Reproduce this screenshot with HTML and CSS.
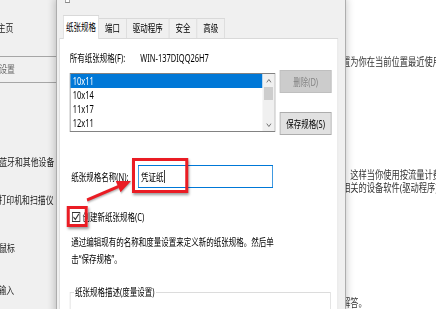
FILE: index.html
```html
<!DOCTYPE html>
<html lang="zh-CN">
<head>
  <meta charset="UTF-8">
  <title>打印服务器属性 - 纸张规格</title>
  <link rel="stylesheet" href="styles.css">
</head>
<body>
  <div id="screen">
    <div id="nav">
      <div class="nav-item" id="home">主页</div>
      <div id="search">设置</div>
      <div class="nav-item" id="bt">蓝牙和其他设备</div>
      <div class="nav-item" id="printer">打印机和扫描仪</div>
      <div class="nav-item" id="mouse">鼠标</div>
      <div class="nav-item" id="typing">输入</div>
    </div>

    <div id="page">
      <p class="line" id="l1">置为你在当前位置最近使用的打印机</p>
      <p class="line" id="l2">，这样当你使用按流量计费的连接时</p>
      <p class="line" id="l3">相关的设备软件(驱动程序)</p>
      <p class="line" id="l4">解答。</p>
    </div>

    <div id="dialog">
      <div id="titleIcon"></div>
      <div id="tabs">
        <div class="tab active">纸张规格</div>
        <div class="tab">端口</div>
        <div class="tab">驱动程序</div>
        <div class="tab">安全</div>
        <div class="tab">高级</div>
      </div>

      <div id="panel">
        <div class="row"><span class="lbl">所有纸张规格(F):</span><span>WIN-137DIQQ26H7</span></div>

        <div id="listRow">
          <div id="list">
            <ul id="items">
              <li class="sel">10x11</li>
              <li>10x14</li>
              <li>11x17</li>
              <li>12x11</li>
            </ul>
            <div id="scroll">
              <div class="arr"><svg width="7" height="4" viewBox="0 0 7 4"><polyline points="0.5,3.5 3.5,0.5 6.5,3.5" fill="none" stroke="#606060" stroke-width="1"/></svg></div>
              <div class="thumb"></div>
              <div class="track"></div>
              <div class="arr"><svg width="7" height="4" viewBox="0 0 7 4"><polyline points="0.5,0.5 3.5,3.5 6.5,0.5" fill="none" stroke="#606060" stroke-width="1"/></svg></div>
            </div>
          </div>
          <div id="btns">
            <button class="but" disabled>删除(D)</button>
            <button class="but">保存规格(S)</button>
          </div>
        </div>

        <div id="nameRow">
          <label>纸张规格名称(N):</label>
          <div id="nameInput">凭证纸<span class="caret"></span></div>
        </div>

        <div id="checkRow">
          <span class="check"><svg width="9" height="8" viewBox="0 0 9 8"><polyline points="1,4 3.5,6.5 8,1" fill="none" stroke="#333" stroke-width="1.2"/></svg></span>
          创建新纸张规格(C)
        </div>

        <p id="hint">通过编辑现有的名称和度量设置来定义新的纸张规格。然后单<br>击“保存规格”。</p>

        <fieldset>
          <legend>纸张规格描述(度量设置)</legend>
        </fieldset>
      </div>
    </div>

    <!-- red marks drawn over the shot -->
    <div class="mark" id="mark1"></div>
    <div class="mark" id="mark2"></div>
    <svg id="arrow" width="582" height="309" viewBox="0 0 582 309">
      <line x1="116" y1="200" x2="158" y2="186.5" stroke="#ea1c24" stroke-width="3"/>
      <polygon points="174.7,181 154.3,181 160.7,192.2" fill="#ea1c24"/>
    </svg>
  </div>
</body>
</html>
```

FILE: styles.css
```css
* {
  margin: 0;
  padding: 0;
  box-sizing: border-box;
}
html, body {
  width: 436px;
  height: 309px;
  overflow: hidden;
  background: #fff;
}
body {
  font-family: "Noto Sans", "Noto Sans CJK SC", sans-serif;
  font-size: 10px;
  color: #000;
}

/* the shot is squeezed to 3/4 width, so lay it out wide and scale back */
#screen {
  position: relative;
  display: flex;
  width: 582px;
  height: 309px;
  transform: scaleX(0.75);
  transform-origin: 0 0;
  overflow: hidden;
}

/* settings window behind */
#nav {
  width: 75px;
  flex: none;
  background: #f0f0f0;
  font-size: 10.5px;
  line-height: 14px;
  color: #1a1a1a;
}
.nav-item {
  white-space: nowrap;
  margin-left: -1px;
}
#home {
  margin-top: 21px;
  margin-left: -3px;
}
#search {
  margin-top: 21px;
  margin-left: -12px;
  width: 100px;
  height: 27px;
  border: 1px solid #a6a6a6;
  padding: 5px 0 0 10px;
  color: #666;
}
#bt { margin-top: 72px; }
#printer { margin-top: 24px; margin-left: -2px; }
#mouse { margin-top: 34px; }
#typing { margin-top: 28px; margin-left: -2px; }

#page {
  flex: 1;
  padding-left: 381px;
  font-size: 11px;
  line-height: 14px;
  color: #333;
  white-space: nowrap;
}
#l1 { margin-top: 55px; }
#l2 { margin-top: 99px; }
#l3 { margin-top: -1px; }
#l4 { margin-top: 101px; }

/* dialog */
#dialog {
  position: absolute;
  left: 75px;
  top: 0;
  width: 386px;
  height: 330px;
  background: #f0f0f0;
  border-left: 1px solid #9a9a9a;
  border-right: 1px solid #9a9a9a;
  padding: 0 9px 0 3px;
  box-shadow: 0 0 9px 2px rgba(0, 0, 0, 0.22);
}
#titleIcon {
  width: 6px;
  height: 3px;
  margin-left: 8px;
  background: #fff;
  border: 1px solid #8a8a8a;
  border-top: none;
}

#tabs {
  display: flex;
  align-items: flex-end;
  margin-top: 12px;
  padding-left: 5px;
}
.tab {
  height: 20px;
  padding: 0 8px;
  margin-left: -1px;
  border: 1px solid #d9d9d9;
  border-bottom: none;
  background: #f0f0f0;
  line-height: 19px;
}
.tab.active {
  position: relative;
  z-index: 1;
  height: 24px;
  padding: 0 3px;
  margin-left: 0;
  margin-bottom: -1px;
  background: #fff;
  line-height: 23px;
}

#panel {
  height: 290px;
  background: #fff;
  border: 1px solid #d9d9d9;
  padding: 12px 0 0 13px;
}
.row {
  display: flex;
  height: 14px;
  line-height: 14px;
}
.lbl {
  width: 94px;
}

#listRow {
  display: flex;
  align-items: flex-start;
  gap: 6px;
  margin-top: 5px;
}
#list {
  display: flex;
  width: 274px;
  height: 59px;
  margin-top: 3px;
  border: 1px solid #828282;
}
#items {
  flex: 1;
  list-style: none;
}
#items li {
  height: 14px;
  line-height: 14px;
  padding-left: 3px;
}
#items li.sel {
  background: #0078d7;
  color: #fff;
}
#scroll {
  width: 16px;
  display: flex;
  flex-direction: column;
  align-items: center;
  background: #f0f0f0;
}
.arr {
  width: 100%;
  height: 13px;
  display: flex;
  align-items: center;
  justify-content: center;
}
.arr svg {
  display: block;
}
.thumb {
  width: 12px;
  height: 13px;
  background: #cdcdcd;
}
.track {
  flex: 1;
}

#btns {
  display: flex;
  flex-direction: column;
  gap: 19px;
  width: 69px;
}
.but {
  height: 23px;
  border: 1px solid #adadad;
  background: #e1e1e1;
  color: #000;
  font: inherit;
}
.but:disabled {
  background: #cccccc;
  border-color: #bfbfbf;
  color: #838383;
}

#nameRow {
  display: flex;
  align-items: center;
  margin-top: 30px;
}
#nameRow label {
  width: 89px;
  margin-left: 2px;
  line-height: 14px;
}
#nameInput {
  display: flex;
  align-items: center;
  width: 180px;
  height: 23px;
  padding-left: 3px;
  border: 1px solid #0078d7;
  background: #fff;
}
.caret {
  width: 1px;
  height: 13px;
  margin-left: 1px;
  background: #000;
}

#checkRow {
  display: flex;
  align-items: center;
  height: 14px;
  line-height: 14px;
  margin-top: 22px;
  padding-left: 3px;
}
.check {
  display: flex;
  align-items: center;
  justify-content: center;
  width: 11px;
  height: 10px;
  margin-right: 3px;
  border: 1px solid #333;
  background: #fff;
}
.check svg {
  display: block;
}

#hint {
  margin-top: 10px;
  margin-left: 2px;
  line-height: 17px;
}

fieldset {
  width: 348px;
  height: 50px;
  margin-top: 17px;
  padding: 0 4px;
  border: 1px solid #dcdcdc;
}
legend {
  padding: 0 2px;
  line-height: 14px;
}

/* annotations */
.mark {
  position: absolute;
  border: 3px solid #ea1c24;
  border-left-width: 4px;
  border-right-width: 4px;
  box-shadow: 1px 2px 3px rgba(0, 0, 0, 0.4);
}
#mark1 {
  left: 176px;
  top: 158px;
  width: 75px;
  height: 35px;
}
#mark2 {
  left: 89px;
  top: 206px;
  width: 28px;
  height: 21px;
}
#arrow {
  position: absolute;
  left: 0;
  top: 0;
  filter: drop-shadow(1px 1px 1px rgba(0, 0, 0, 0.35));
}
```
